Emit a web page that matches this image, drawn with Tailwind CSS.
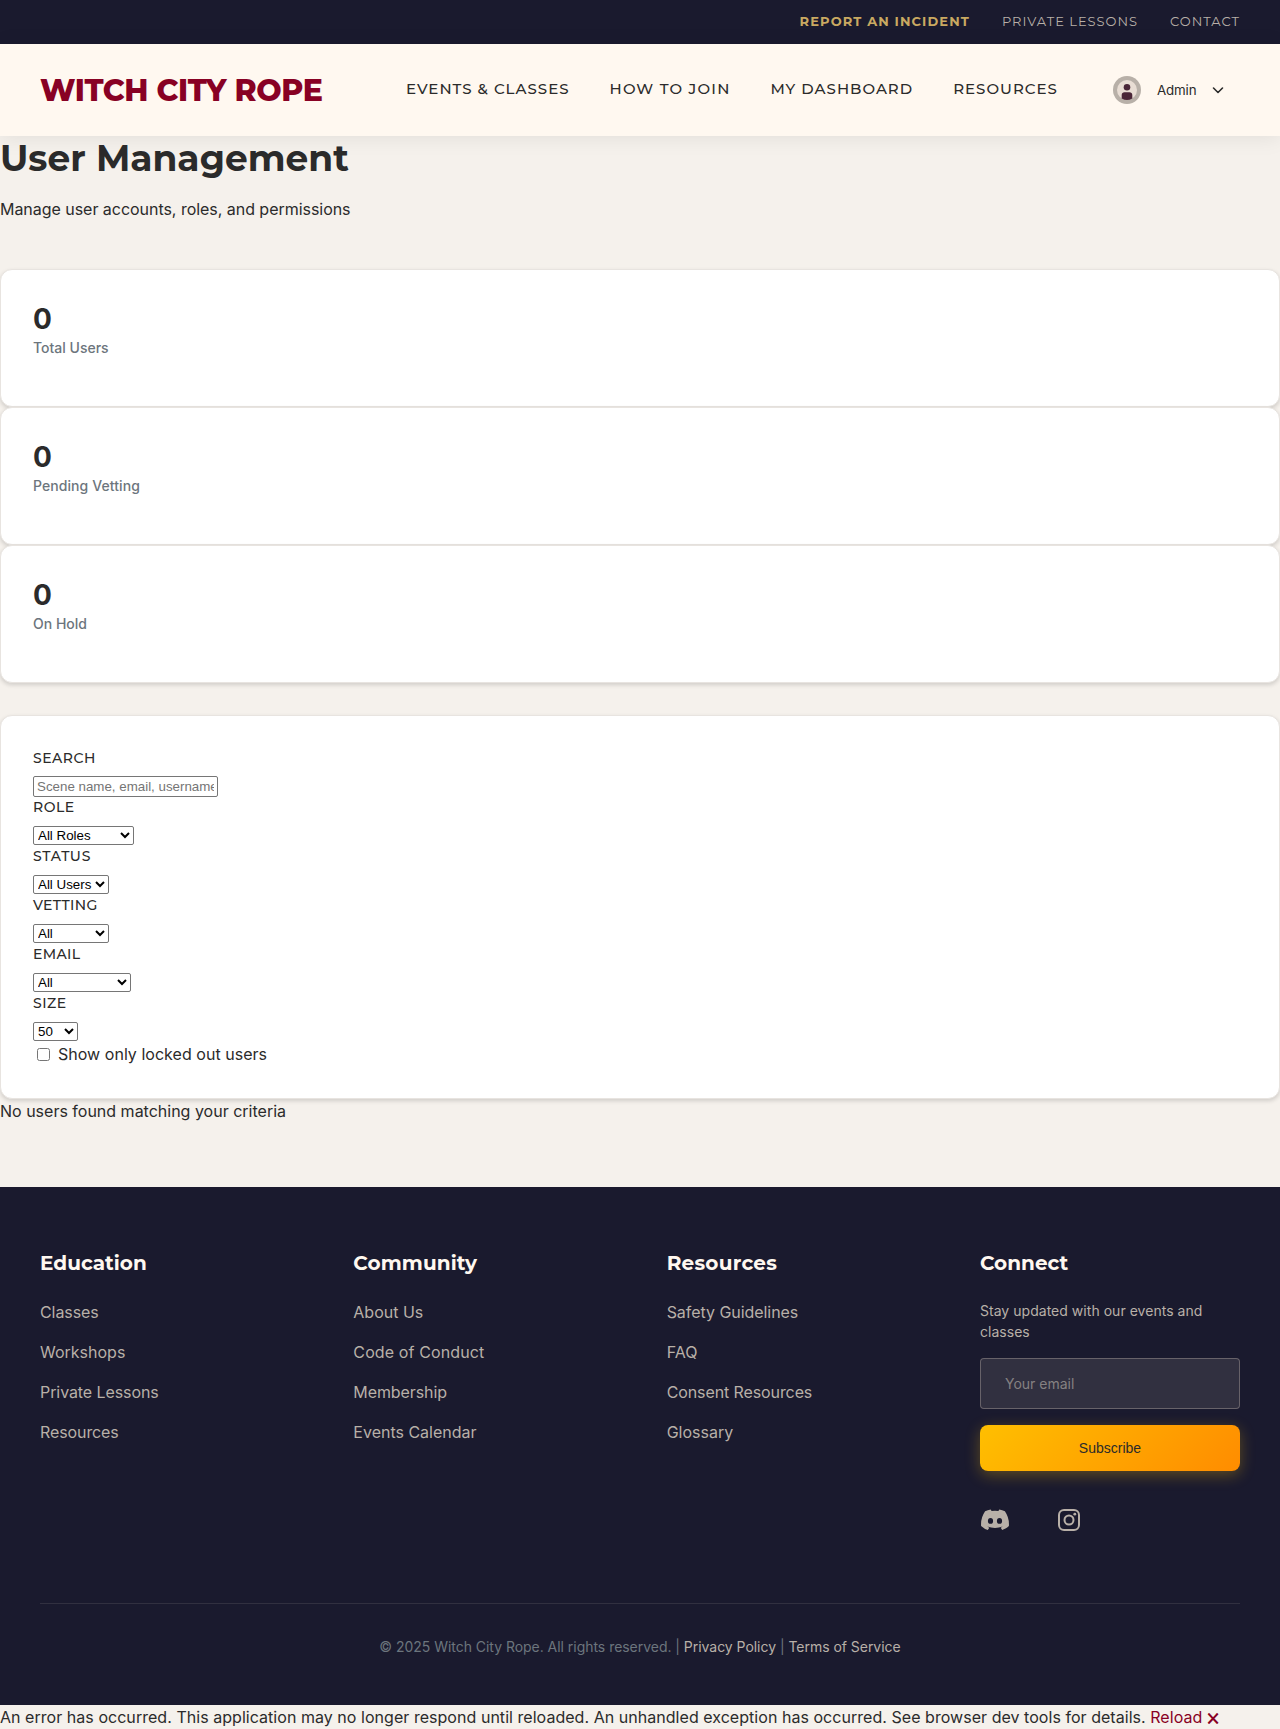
<!DOCTYPE html>
<html lang="en">
<head>
<meta charset="utf-8">
<title>User Management - Witch City Rope</title>
<script src="https://cdn.jsdelivr.net/npm/@tailwindcss/browser@4"></script>
</head>
<body class="bg-[#f5f1ec] font-['Inter',sans-serif] text-base leading-6 text-[#2b2b2b]">
<div class="flex h-11 items-center justify-end gap-8 bg-[#1a1a2e] px-10 pb-0.5 font-['Montserrat',sans-serif] text-[13px] uppercase tracking-[1px] text-[#b8b0a8]">
  <a class="font-bold tracking-[1.1px] text-[#c9a961]">Report an Incident</a><a>Private Lessons</a><a>Contact</a>
</div>
<header class="relative flex h-[92px] items-center bg-[#fff8f0] px-10 font-['Montserrat',sans-serif] shadow-[0_2px_20px_rgba(0,0,0,0.08)]">
  <a class="w-[366px] whitespace-nowrap pt-0.5 text-[30px] font-extrabold tracking-[-0.4px] text-[#880124]">WITCH CITY ROPE</a>
  <nav class="flex gap-10 whitespace-nowrap pb-0.5 text-[15px] font-medium uppercase tracking-[1px]">
    <a>Events &amp; Classes</a><a class="tracking-[1.2px]">How to Join</a><a>My Dashboard</a><a>Resources</a>
  </nav>
  <div class="ml-auto mr-4 flex items-center gap-4 font-['Inter',sans-serif] text-[13.333px]">
    <svg class="size-7" viewBox="0 0 28 28"><circle cx="14" cy="14" r="14" fill="#b8b0a8"/><circle cx="14" cy="14" r="10" fill="#e8ddd4"/><circle cx="14" cy="11.3" r="3.3" fill="#4a2638"/><path d="M8.7 22.4v-3.300c0-1.800 1.200-2.800 2.800-2.800h5c1.600 0 2.800 1 2.800 2.800v3.300q-5.300 3.200-10.600 0z" fill="#4a2638"/></svg>
    <span class="w-[39px] whitespace-nowrap tracking-[-0.15px]">Admin</span>
    <svg class="size-3" viewBox="0 0 12 12" fill="none" stroke="#2b2b2b" stroke-width="1.6" stroke-linecap="round" stroke-linejoin="round"><path d="M1.500 4l4.500 4.500L10.500 4"/></svg>
  </div>
</header>
<main class="h-[1051px]">
  <h1 class="font-['Montserrat',sans-serif] text-4xl font-bold leading-[45px]">User Management</h1>
  <p class="mt-3.5 leading-[29px] tracking-[-0.035px]">Manage user accounts, roles, and permissions</p>
  <section class="mt-[45px]">
    <div class="h-[138px] rounded-xl border border-[#e8e4e0] bg-white px-8 pt-8 shadow-[0_2px_4px_rgba(0,0,0,0.15)]"><div class="text-[28px] font-bold leading-[35px]">0</div><div class="text-sm font-medium leading-[22px] text-[#6c757d]">Total Users</div></div>
    <div class="h-[138px] rounded-xl border border-[#e8e4e0] bg-white px-8 pt-8 shadow-[0_2px_4px_rgba(0,0,0,0.15)]"><div class="text-[28px] font-bold leading-[35px]">0</div><div class="text-sm font-medium leading-[22px] tracking-[0.08px] text-[#6c757d]">Pending Vetting</div></div>
    <div class="h-[138px] rounded-xl border border-[#e8e4e0] bg-white px-8 pt-8 shadow-[0_2px_4px_rgba(0,0,0,0.15)]"><div class="text-[28px] font-bold leading-[35px]">0</div><div class="text-sm font-medium leading-[22px] text-[#6c757d]">On Hold</div></div>
  </section>
  <section class="mt-8 h-[384px] rounded-xl border border-[#e8e4e0] bg-white p-8 shadow-[0_2px_4px_rgba(0,0,0,0.15)]">
    <div class="flex h-[49px] flex-col items-start"><label class="mb-2 font-['Montserrat',sans-serif] text-sm font-medium uppercase leading-5 tracking-[0.5px]">Search</label><input placeholder="Scene name, email, username..." class="h-[21px] w-[185px] rounded-xs border border-[#767676] bg-white px-[3px] font-['Liberation_Sans',sans-serif] text-[13.333px] placeholder:text-[#757575]"></div>
    <div class="flex h-[49px] flex-col items-start"><label class="mb-[9px] font-['Montserrat',sans-serif] text-sm font-medium uppercase leading-5 tracking-[0.5px]">Role</label><select class="h-[19px] w-[101px] rounded-xs border border-[#767676] bg-white font-['Liberation_Sans',sans-serif] text-[13.333px] text-black"><option>All Roles</option></select></div>
    <div class="flex h-[49px] flex-col items-start"><label class="mb-[9px] font-['Montserrat',sans-serif] text-sm font-medium uppercase leading-5 tracking-[0.7px]">Status</label><select class="h-[19px] w-[76px] rounded-xs border border-[#767676] bg-white font-['Liberation_Sans',sans-serif] text-[13.333px] text-black"><option>All Users</option></select></div>
    <div class="flex h-[49px] flex-col items-start"><label class="mb-[9px] font-['Montserrat',sans-serif] text-sm font-medium uppercase leading-5 tracking-[0.35px]">Vetting</label><select class="h-[19px] w-[76px] rounded-xs border border-[#767676] bg-white font-['Liberation_Sans',sans-serif] text-[13.333px] text-black"><option>All</option></select></div>
    <div class="flex h-[49px] flex-col items-start"><label class="mb-[9px] font-['Montserrat',sans-serif] text-sm font-medium uppercase leading-5 tracking-[0.35px]">Email</label><select class="h-[19px] w-[98px] rounded-xs border border-[#767676] bg-white font-['Liberation_Sans',sans-serif] text-[13.333px] text-black"><option>All</option></select></div>
    <div class="flex h-[49px] flex-col items-start"><label class="mb-[9px] font-['Montserrat',sans-serif] text-sm font-medium uppercase leading-5 tracking-[0.5px]">Size</label><select class="h-[19px] w-[45px] rounded-xs border border-[#767676] bg-white font-['Liberation_Sans',sans-serif] text-[13.333px] text-black"><option>50</option></select></div>
    <label class="flex h-6 items-center pl-1 tracking-[0.03px]"><input type="checkbox" class="mr-2 size-[13px]">Show only locked out users</label>
  </section>
  <p>No users found matching your criteria</p>
</main>
<footer class="h-[518px] bg-[#1a1a2e] px-10 pt-16 text-[#b8b0a8]">
  <div class="grid h-[353px] grid-cols-4 gap-x-[53.333px] border-b border-[#b8b0a8]/15">
    <div><h3 class="font-['Montserrat',sans-serif] text-xl font-bold leading-6 text-[#fff8f0]">Education</h3><ul class="mt-[17px]"><li class="h-10 leading-10 tracking-[-0.08px]">Classes</li><li class="h-10 leading-10">Workshops</li><li class="h-10 leading-10 tracking-[-0.08px]">Private Lessons</li><li class="h-10 leading-10 tracking-[-0.1px]">Resources</li></ul></div>
    <div><h3 class="font-['Montserrat',sans-serif] text-xl font-bold leading-6 tracking-[0.1px] text-[#fff8f0]">Community</h3><ul class="mt-[17px]"><li class="h-10 leading-10">About Us</li><li class="h-10 leading-10 tracking-[0.12px]">Code of Conduct</li><li class="h-10 leading-10 tracking-[-0.1px]">Membership</li><li class="h-10 leading-10">Events Calendar</li></ul></div>
    <div><h3 class="font-['Montserrat',sans-serif] text-xl font-bold leading-6 tracking-[0.25px] text-[#fff8f0]">Resources</h3><ul class="mt-[17px]"><li class="h-10 leading-10 tracking-[-0.05px]">Safety Guidelines</li><li class="h-10 leading-10">FAQ</li><li class="h-10 leading-10 tracking-[-0.1px]">Consent Resources</li><li class="h-10 leading-10">Glossary</li></ul></div>
    <div><h3 class="font-['Montserrat',sans-serif] text-xl font-bold leading-6 text-[#fff8f0]">Connect</h3>
      <p class="mt-[25px] text-sm leading-[21px] tracking-[0.03px]">Stay updated with our events and classes</p>
      <input placeholder="Your email" class="mt-4 block h-[51px] w-full rounded-[4px] border border-[#b8b0a8]/40 bg-[#b8b0a8]/15 px-6 text-sm placeholder:text-[#858182]">
      <button class="mt-4 block h-[46px] w-full rounded-lg bg-[linear-gradient(135deg,#ffbf00,#ff8c00)] font-['Liberation_Sans',sans-serif] text-sm text-[#2b2b2b] shadow-[0_4px_15px_rgba(255,191,0,0.3)]">Subscribe</button>
      <div class="mt-[33px] flex h-8 items-center">
        <svg class="h-[22px] w-[30px]" viewBox="0 0 30 22" fill="#b8b0a8"><path fill-rule="evenodd" d="M10.700.5l.9 1.600q3.400-.5 6.800 0L19.300.5q3 .5 5.600 1.800 4.600 6.700 4 14.700c-2.300 2.100-4.500 3.200-6.700 4.100l-1.500-2.400 2-1.100q-7.700 2.700-15.400 0l2 1.100-1.500 2.400Q4.400 20 1.100 17 .5 9 5.100 2.300 7.700 1 10.700.5zM10.500 9a2.600 2.900 0 1 0 0 5.800 2.600 2.900 0 1 0 0-5.800zm9 0a2.600 2.900 0 1 0 0 5.800 2.600 2.900 0 1 0 0-5.800z"/></svg>
        <svg class="ml-[48px] size-[22px]" viewBox="0 0 22 22" fill="none" stroke="#b8b0a8" stroke-width="2"><rect x="1" y="1" width="20" height="20" rx="5"/><circle cx="11" cy="11" r="4.500"/><circle cx="16.800" cy="5.200" r="1.400" fill="#b8b0a8" stroke="none"/></svg>
      </div>
    </div>
  </div>
  <p class="mt-8 text-center text-sm leading-[22px] tracking-[-0.035px] text-[#6c757d]">© 2025 Witch City Rope. All rights reserved. | <a class="text-[#b8b0a8]">Privacy Policy</a> | <a class="text-[#b8b0a8]">Terms of Service</a></p>
</footer>
<div class="h-6 overflow-hidden whitespace-nowrap tracking-[0.04px]">An error has occurred. This application may no longer respond until reloaded. An unhandled exception has occurred. See browser dev tools for details. <a class="text-[#880124]">Reload</a> <a class="text-[#880124]">🗙</a></div>
</body>
</html>
